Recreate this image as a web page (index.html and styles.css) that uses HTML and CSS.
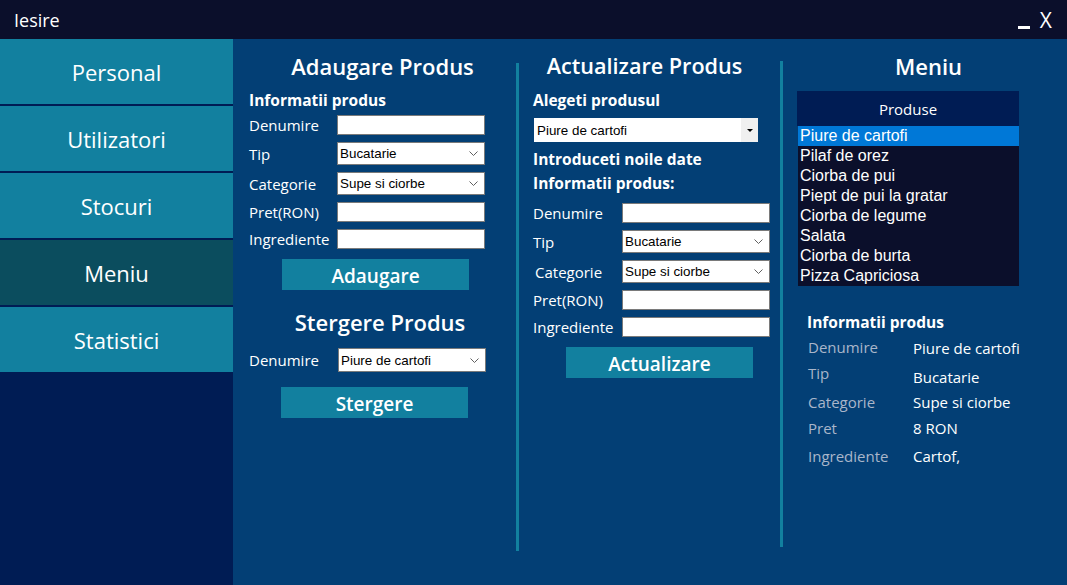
FILE: index.html
```html
<!DOCTYPE html>
<html lang="ro">
<head>
<meta charset="utf-8">
<title>Meniu</title>
<link rel="stylesheet" href="styles.css">
</head>
<body>
<div class="window">
  <header class="titlebar">
    <span class="title">Iesire</span>
    <div class="controls"><span class="min"></span><span class="close">X</span></div>
  </header>
  <div class="body">
    <nav class="sidebar">
      <div class="nav-item">Personal</div>
      <div class="nav-item">Utilizatori</div>
      <div class="nav-item">Stocuri</div>
      <div class="nav-item active">Meniu</div>
      <div class="nav-item">Statistici</div>
    </nav>
    <main class="main">
      <section class="col col1">
        <h2 class="heading">Adaugare Produs</h2>
        <h3 class="subhead">Informatii produs</h3>
        <div class="form">
          <div class="form-row"><span class="lbl">Denumire</span><div class="input"></div></div>
          <div class="form-row"><span class="lbl">Tip</span><div class="select"><span>Bucatarie</span><svg class="chev" width="9" height="5" viewBox="0 0 9 5"><path d="M0.5 0.5 L4.5 4.5 L8.5 0.5" fill="none" stroke="#606060" stroke-width="1"/></svg></div></div>
          <div class="form-row"><span class="lbl">Categorie</span><div class="select"><span>Supe si ciorbe</span><svg class="chev" width="9" height="5" viewBox="0 0 9 5"><path d="M0.5 0.5 L4.5 4.5 L8.5 0.5" fill="none" stroke="#606060" stroke-width="1"/></svg></div></div>
          <div class="form-row"><span class="lbl">Pret(RON)</span><div class="input"></div></div>
          <div class="form-row"><span class="lbl">Ingrediente</span><div class="input"></div></div>
        </div>
        <button class="btn btn-add">Adaugare</button>
        <h2 class="heading heading-del">Stergere Produs</h2>
        <div class="form-row row-del"><span class="lbl">Denumire</span><div class="select select-del"><span>Piure de cartofi</span><svg class="chev" width="9" height="5" viewBox="0 0 9 5"><path d="M0.5 0.5 L4.5 4.5 L8.5 0.5" fill="none" stroke="#606060" stroke-width="1"/></svg></div></div>
        <button class="btn btn-del">Stergere</button>
      </section>
      <div class="divider divider1"></div>
      <section class="col col2">
        <h2 class="heading heading-upd">Actualizare Produs</h2>
        <h3 class="subhead">Alegeti produsul</h3>
        <div class="combo"><span>Piure de cartofi</span><div class="combo-arrow"><svg width="6" height="3" viewBox="0 0 6 3"><path d="M0 0 H6 L3 3 Z" fill="#000"/></svg></div></div>
        <h3 class="subhead sub-new">Introduceti noile date</h3>
        <h3 class="subhead sub-info">Informatii produs:</h3>
        <div class="form form2">
          <div class="form-row"><span class="lbl">Denumire</span><div class="input"></div></div>
          <div class="form-row"><span class="lbl">Tip</span><div class="select"><span>Bucatarie</span><svg class="chev" width="9" height="5" viewBox="0 0 9 5"><path d="M0.5 0.5 L4.5 4.5 L8.5 0.5" fill="none" stroke="#606060" stroke-width="1"/></svg></div></div>
          <div class="form-row"><span class="lbl lbl-shift">Categorie</span><div class="select"><span>Supe si ciorbe</span><svg class="chev" width="9" height="5" viewBox="0 0 9 5"><path d="M0.5 0.5 L4.5 4.5 L8.5 0.5" fill="none" stroke="#606060" stroke-width="1"/></svg></div></div>
          <div class="form-row"><span class="lbl">Pret(RON)</span><div class="input"></div></div>
          <div class="form-row"><span class="lbl">Ingrediente</span><div class="input"></div></div>
        </div>
        <button class="btn btn-upd">Actualizare</button>
      </section>
      <div class="divider divider2"></div>
      <section class="col col3">
        <h2 class="heading heading-menu">Meniu</h2>
        <div class="listbox">
          <div class="list-head">Produse</div>
          <ul class="list">
            <li class="selected">Piure de cartofi</li>
            <li>Pilaf de orez</li>
            <li>Ciorba de pui</li>
            <li>Piept de pui la gratar</li>
            <li>Ciorba de legume</li>
            <li>Salata</li>
            <li>Ciorba de burta</li>
            <li>Pizza Capriciosa</li>
          </ul>
        </div>
        <h3 class="subhead info-head">Informatii produs</h3>
        <div class="info">
          <span class="k">Denumire</span><span class="v v1">Piure de cartofi</span>
          <span class="k">Tip</span><span class="v v2">Bucatarie</span>
          <span class="k">Categorie</span><span class="v">Supe si ciorbe</span>
          <span class="k">Pret</span><span class="v">8 RON</span>
          <span class="k">Ingrediente</span><span class="v">Cartof,</span>
        </div>
      </section>
    </main>
  </div>
</div>
</body>
</html>
```

FILE: styles.css
```css
* { box-sizing: border-box; margin: 0; padding: 0; }
html, body { width: 1067px; height: 585px; overflow: hidden; }
body { background: #033f75; font-family: "Open Sans", "Noto Sans", sans-serif; color: #ffffff; }

.window { width: 1067px; height: 585px; display: flex; flex-direction: column; }

.titlebar { height: 39px; background: #0b0f2b; display: flex; justify-content: space-between; align-items: flex-start; flex-shrink: 0; }
.title { font-size: 18px; line-height: 37px; padding-top: 2px; padding-left: 14px; }
.controls { display: flex; align-items: flex-start; padding-right: 15px; }
.min { width: 12px; height: 3px; background: #ffffff; margin-top: 26px; margin-right: 10px; }
.close { font-size: 21px; line-height: 20px; margin-top: 10px; }

.body { flex: 1; display: flex; }
.sidebar { width: 233px; flex-shrink: 0; background: #001c54; display: flex; flex-direction: column; gap: 2px; }
.nav-item { height: 65px; background: #12809f; display: flex; align-items: center; justify-content: center; font-size: 22px; font-weight: 500; }
.nav-item.active { background: #0b4d5e; }

.main { flex: 1; display: flex; align-items: flex-start; }
.col { display: flex; flex-direction: column; align-items: flex-start; }
.col1 { width: 283px; padding: 12px 0 0 16px; }
.col2 { width: 261px; padding: 12px 0 0 14px; }
.col3 { flex: 1; padding: 12px 0 0 14px; }

.divider { width: 3px; background: #12809f; flex-shrink: 0; }
.divider1 { margin-top: 24px; height: 488px; }
.divider2 { margin-top: 22px; height: 486px; }

.heading { font-size: 22px; line-height: 30px; font-weight: 600; align-self: stretch; text-align: center; }
.heading-upd { padding-right: 24px; font-size: 21.6px; }
.heading-menu { padding-left: 7px; padding-right: 14px; }
.heading-del { margin-top: 17px; padding-right: 5px; }

.subhead { font-size: 15.5px; line-height: 20px; font-weight: 700; margin-top: 9px; }
.sub-new { margin-top: 7px; }
.sub-info { margin-top: 4px; }

.form { display: flex; flex-direction: column; gap: 7px; margin-top: 5px; }
.form2 { margin-top: 10px; }
.form-row { display: flex; align-items: center; }
.lbl { width: 88px; font-size: 15px; line-height: 20px; }
.form2 .lbl { width: 89px; }
.lbl-shift { padding-left: 2px; }

.input { width: 148px; height: 20px; background: #ffffff; border: 1px solid #7a7a7a; }
.select { width: 148px; height: 23px; background: #ffffff; border: 1px solid #7a7a7a; display: flex; align-items: center; justify-content: space-between; padding: 0 6px 0 2px; font-family: "Liberation Sans", Arial, sans-serif; font-size: 13.4px; color: #000000; }
.chev { display: block; }

.btn { width: 187px; height: 31px; background: #12809f; border: none; color: #ffffff; font-family: "Open Sans", "Noto Sans", sans-serif; font-size: 19px; font-weight: 600; display: flex; align-items: center; justify-content: center; padding-top: 3px; }
.btn-add { margin: 10px 0 0 33px; }
.row-del { margin-top: 11px; }
.row-del .lbl { width: 89px; }
.select-del { height: 24px; }
.btn-del { margin: 15px 0 0 32px; }
.btn-upd { margin: 10px 0 0 33px; }

.combo { width: 224px; height: 24px; margin-top: 8px; margin-left: 1px; background: #ffffff; display: flex; align-items: center; justify-content: space-between; font-family: "Liberation Sans", Arial, sans-serif; font-size: 13.4px; color: #000000; padding-left: 3px; }
.combo-arrow { width: 17px; height: 24px; background: #f0f0f0; display: flex; align-items: center; justify-content: center; }
.combo-arrow svg { display: block; }

.listbox { margin-top: 10px; width: 222px; }
.list-head { height: 35px; background: #001c54; display: flex; align-items: center; justify-content: center; font-size: 15px; }
.list { list-style: none; background: #0b0f2b; width: 221px; margin-left: 1px; font-family: "Liberation Sans", Arial, sans-serif; font-size: 16px; }
.list li { height: 20px; line-height: 20px; padding-left: 2px; }
.list li.selected { background: #0078d7; }

.info-head { margin-top: 26px; margin-left: 10px; }
.info { display: grid; grid-template-columns: 105px auto; grid-template-rows: 26px 29px 26px 28px 20px; margin-left: 11px; margin-top: 5px; font-size: 15px; line-height: 20px; }
.k { color: #a9b6ca; }
.v { color: #ffffff; }
.v1 { padding-top: 1px; }
.v2 { padding-top: 4px; }
```
